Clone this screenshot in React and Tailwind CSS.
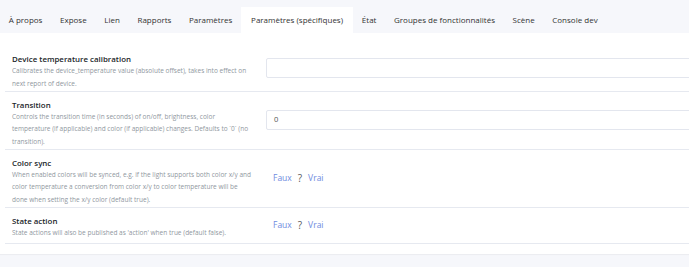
import React from 'react';

const tabs = [
  'À propos',
  'Expose',
  'Lien',
  'Rapports',
  'Paramètres',
  'Paramètres (spécifiques)',
  'État',
  'Groupes de fonctionnalités',
  'Scène',
  'Console dev',
];

// description lines kept as they wrap in the panel
const settings = [
  {
    title: 'Device temperature calibration',
    desc: [
      'Calibrates the device_temperature value (absolute offset), takes into effect on',
      'next report of device.',
    ],
    type: 'input',
    value: '',
  },
  {
    title: 'Transition',
    desc: [
      'Controls the transition time (in seconds) of on/off, brightness, color',
      'temperature (if applicable) and color (if applicable) changes. Defaults to `0` (no',
      'transition).',
    ],
    type: 'input',
    value: '0',
  },
  {
    title: 'Color sync',
    desc: [
      'When enabled colors will be synced, e.g. if the light supports both color x/y and',
      'color temperature a conversion from color x/y to color temperature will be',
      'done when setting the x/y color (default true).',
    ],
    type: 'bool',
  },
  {
    title: 'State action',
    desc: ["State actions will also be published as 'action' when true (default false)."],
    type: 'bool',
  },
];

const BoolToggle = () => (
  <div className="flex items-center gap-[6px] text-[8.5px] pl-[7px]">
    <span className="text-[#6f8be0]">Faux</span>
    <span className="text-[#5a5a5a] text-[10px] font-medium">?</span>
    <span className="text-[#6f8be0]">Vrai</span>
  </div>
);

export default function App() {
  return (
    <div
      className="w-[689px] h-[267px] bg-[#f6f7fb] overflow-hidden text-[#212529]"
      style={{ fontFamily: '"Open Sans", "Noto Sans", sans-serif' }}
    >
      {/* Tabs */}
      <div className="flex h-[33px] items-end">
        {tabs.map((t, i) => (
          <div
            key={t}
            className={
              i === 5
                ? 'h-[26px] flex items-center px-[10px] bg-white text-[8px] text-[#333] whitespace-nowrap'
                : 'h-[26px] flex items-center px-[8.8px] text-[8px] text-[#333] whitespace-nowrap'
            }
          >
            {t}
          </div>
        ))}
      </div>

      {/* Card */}
      <div className="bg-white h-[221px] pt-[13px] pl-[5px] shadow-[0_1px_1px_rgba(0,0,0,0.04)] overflow-hidden">
        {settings.map((s) => (
          <div
            key={s.title}
            className="flex border-b border-[#e6e9f0] min-h-[36px]"
          >
            <div className="w-[249px] pl-[7px] pt-[7px] pb-[0.5px] shrink-0">
              <div className="text-[7.9px] font-semibold leading-[12px] text-[#212529] whitespace-nowrap">
                {s.title}
              </div>
              <div className="text-[6.5px] leading-[12.5px] text-[#9097a0] whitespace-nowrap">
                {s.desc.map((line) => (
                  <div key={line}>{line}</div>
                ))}
              </div>
            </div>
            <div className="flex-1 flex items-center pl-[12px]">
              {s.type === 'input' ? (
                <div className="w-[calc(100%+12px)] shrink-0 h-[20px] border border-[#e3e6ee] rounded-[2px] flex items-center px-[7px] text-[7.6px] text-[#555]">
                  {s.value}
                </div>
              ) : (
                <BoolToggle />
              )}
            </div>
          </div>
        ))}
      </div>
    </div>
  );
}
